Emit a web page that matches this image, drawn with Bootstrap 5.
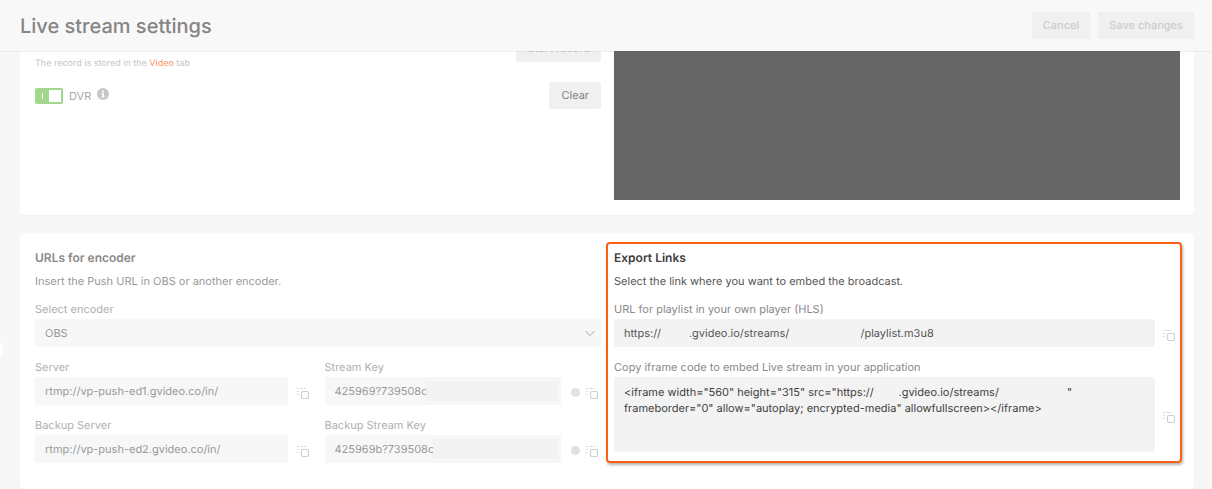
<!DOCTYPE html>
<html lang="en">
<head>
<meta charset="utf-8">
<meta name="viewport" content="width=device-width, initial-scale=1">
<title>Live stream settings</title>
<link href="https://cdn.jsdelivr.net/npm/bootstrap@5.3.0/dist/css/bootstrap.min.css" rel="stylesheet">
<style>
  body { font-family: Inter, "Liberation Sans", sans-serif; font-size: 11px; line-height: 16px; background: #f7f7f7; color: #999; text-rendering: geometricPrecision; }
  input, textarea, select, button { text-rendering: inherit; }
  .page-head { height: 51px; padding: 0 18px 0 20px; background: #f8f8f8; z-index: 2; box-shadow: 0 1px 0 rgba(0,0,0,.05); }
  .page-head h1 { font-size: 20px; line-height: 24px; font-weight: 500; color: #858585; }
  .btn-soft { --bs-btn-font-size: 11px; --bs-btn-line-height: 15px; --bs-btn-padding-y: 6px; --bs-btn-padding-x: 11px; --bs-btn-border-width: 0; --bs-btn-border-radius: 2px; --bs-btn-bg: #f0f0f0; --bs-btn-color: #8c8c8c; --bs-btn-hover-bg: #e8e8e8; --bs-btn-disabled-bg: #f0f0f0; --bs-btn-disabled-color: #ccc; --bs-btn-disabled-opacity: 1; --bs-btn-font-weight: 500; }
  .btn-clear { --bs-btn-font-weight: 400; --bs-btn-padding-x: 12px; --bs-btn-color: #808080; }
  .page-body { padding: 0 18px 0 20px; gap: 18px; }
  .panel { background: #fff; border-radius: 4px; padding: 17px 14px 15px 15px; box-shadow: 0 1px 1px #f0f0f0; }
  .panel-scrolled { margin-top: -33px; }
  .halves { display: grid; grid-template-columns: minmax(0, 1fr) minmax(0, 1fr); column-gap: 13px; }
  .player { background: #666; height: 165px; }
  .caption { font-size: 9px; color: #c4c4c4; }
  .caption a { color: #ff8f66; text-decoration: none; }
  .rec-row { height: 27px; margin-bottom: 20px; }
  .rec-row .caption { padding-top: 21px; }
  .dvr-toggle { appearance: none; width: 28px; height: 16px; margin: 0; border: 2px solid #a3d68f; border-radius: 2px; background: linear-gradient(#fff, #fff) 5px 3px / 1px 6px no-repeat, linear-gradient(90deg, #a3d68f 12px, #fff 12px); }
  .dvr-label { margin: 0 6px; color: #aaa; }
  .panel h2 { font-size: 12px; line-height: 16px; font-weight: 600; margin: 0 0 7px; color: #8a8a8a; }
  .panel p { margin: 0; }
  .stack { display: flex; flex-direction: column; gap: 12px; margin-top: 12px; }
  .stack label { display: block; margin-bottom: 2px; color: #b0b0b0; }
  .field { font-size: 11px; line-height: 16px; padding: 6px 10px; height: 28px; border: 0; border-radius: 2px; background-color: #f7f7f7; color: #999; min-width: 0; }
  .field-select { background-image: url("data:image/svg+xml,%3csvg xmlns='http://www.w3.org/2000/svg' viewBox='0 0 10 10'%3e%3cpath fill='none' stroke='%23aaa' d='M.5 3l4.500 4.500 4.500-4.500'/%3e%3c/svg%3e"); background-size: 10px; background-position: right 6px center; }
  .copy { border: 0; padding: 4px 0 0; background: none; width: 12px; line-height: 0; flex: none; color: #d0d0d0; }
  .copy-server { margin: 0 3px 0 9px; }
  .copy-key { margin-right: 3px; }
  .dot { width: 9px; height: 9px; border-radius: 50%; background: #e2e2e2; margin: 2px 6px 0 10px; border: 0; padding: 0; flex: none; }
  .masked::after { content: ""; position: absolute; inset: 4px 3px 4px 101px; background: #f3f3f3; }
  .masked-late::after { left: 108px; }
  .export { margin: -8px -2px 0 -8px; padding: 6px 5px 9px 6px; border: 2px solid #f9600f; border-radius: 4px; box-shadow: 1px 2px 3px rgba(0,0,0,.3); }
  .export h2 { color: #404040; }
  .export p { color: #555; }
  .export .stack label { color: #888; }
  .export .field { background: #f3f3f3; color: #555; }
  .export textarea.field { height: 75px; resize: none; color: #404040; line-height: 16px; padding-top: 7px; display: block; }
  .side-tab { position: absolute; left: 0; top: 343px; width: 2px; height: 14px; background: #fff; border: 0; padding: 0; border-radius: 0 3px 3px 0; }
</style>
</head>
<body class="d-flex flex-column min-vh-100 position-relative">
<svg class="d-none" aria-hidden="true"><symbol id="copy-icon" viewBox="0 0 12 12"><rect x="4.500" y="4.500" width="7" height="7" rx="1.500" fill="none" stroke="currentColor" stroke-width="1.200"/><path d="M0 1.500h1.500M3 1.500h1.500M5 1.500h1M7 1.500h1.500M0 4.500h1.500M0 7.500h1.500" stroke="currentColor" fill="none"/></symbol></svg>

<header class="page-head d-flex align-items-center justify-content-between position-relative">
  <h1 class="m-0">Live stream settings</h1>
  <div class="d-flex gap-2">
    <button type="button" class="btn btn-soft" disabled>Cancel</button>
    <button type="button" class="btn btn-soft" disabled>Save changes</button>
  </div>
</header>
<button class="side-tab" type="button" aria-label="Expand menu"></button>

<main class="page-body d-flex flex-column flex-grow-1">
  <section class="panel panel-scrolled halves">
    <div>
      <div class="rec-row d-flex justify-content-between align-items-start">
        <p class="caption">The record is stored in the <a href="#">Video</a> tab</p>
        <button type="button" class="btn btn-soft" disabled>Start record</button>
      </div>
      <div class="d-flex align-items-center">
        <input class="dvr-toggle" type="checkbox" role="switch" id="dvr" checked>
        <label for="dvr" class="dvr-label">DVR</label>
        <svg width="12" height="12" viewBox="0 0 12 12" class="mb-1" role="img" aria-label="Info"><circle cx="6" cy="6" r="6" fill="#c8c8c8"/><path d="M5 2.500h2v1.500h-2zM4.500 5h2.500v3.500h.7v1h-3.400v-1h.9v-2.500h-.7z" fill="#fff"/></svg>
        <button type="button" class="btn btn-soft btn-clear ms-auto">Clear</button>
      </div>
    </div>
    <div class="player"></div>
  </section>

  <section class="panel halves flex-grow-1 align-items-start">
    <div>
      <h2>URLs for encoder</h2>
      <p>Insert the Push URL in OBS or another encoder.</p>
      <div class="stack">
        <div>
          <label for="enc">Select encoder</label>
          <select id="enc" class="form-select field field-select"><option>OBS</option></select>
        </div>
        <div class="halves">
          <div class="stack m-0">
            <div>
              <label for="srv">Server</label>
              <div class="d-flex align-items-center">
                <input id="srv" class="form-control field" value="rtmp://vp-push-ed1.gvideo.co/in/" readonly>
                <button class="copy copy-server" type="button" aria-label="Copy"><svg width="12" height="12"><use href="#copy-icon"/></svg></button>
              </div>
            </div>
            <div>
              <label for="bsrv">Backup Server</label>
              <div class="d-flex align-items-center">
                <input id="bsrv" class="form-control field" value="rtmp://vp-push-ed2.gvideo.co/in/" readonly>
                <button class="copy copy-server" type="button" aria-label="Copy"><svg width="12" height="12"><use href="#copy-icon"/></svg></button>
              </div>
            </div>
          </div>
          <div class="stack m-0">
            <div>
              <label for="key">Stream Key</label>
              <div class="d-flex align-items-center">
                <div class="masked position-relative flex-grow-1"><input id="key" class="form-control field" value="425969?739508c0" readonly></div>
                <button class="dot" type="button" aria-label="Show key"></button>
                <button class="copy copy-key" type="button" aria-label="Copy"><svg width="12" height="12"><use href="#copy-icon"/></svg></button>
              </div>
            </div>
            <div>
              <label for="bkey">Backup Stream Key</label>
              <div class="d-flex align-items-center">
                <div class="masked masked-late position-relative flex-grow-1"><input id="bkey" class="form-control field" value="425969b?739508c" readonly></div>
                <button class="dot" type="button" aria-label="Show key"></button>
                <button class="copy copy-key" type="button" aria-label="Copy"><svg width="12" height="12"><use href="#copy-icon"/></svg></button>
              </div>
            </div>
          </div>
        </div>
      </div>
    </div>

    <div class="export">
      <h2>Export Links</h2>
      <p>Select the link where you want to embed the broadcast.</p>
      <div class="stack">
        <div>
          <label for="hls">URL for playlist in your own player (HLS)</label>
          <div class="d-flex align-items-center gap-2">
            <input id="hls" class="form-control field" readonly value="https://&nbsp;&nbsp;&nbsp;&nbsp;&nbsp;&nbsp;&nbsp;&nbsp;&nbsp;.gvideo.io/streams/&nbsp;&nbsp;&nbsp;&nbsp;&nbsp;&nbsp;&nbsp;&nbsp;&nbsp;&nbsp;&nbsp;&nbsp;&nbsp;&nbsp;&nbsp;&nbsp;&nbsp;&nbsp;&nbsp;&nbsp;&nbsp;&nbsp;&nbsp;/playlist.m3u8">
            <button class="copy" type="button" aria-label="Copy"><svg width="12" height="12"><use href="#copy-icon"/></svg></button>
          </div>
        </div>
        <div>
          <label for="ifr">Copy iframe code to embed Live stream in your application</label>
          <div class="d-flex align-items-center gap-2">
            <textarea id="ifr" class="form-control field" readonly>&lt;iframe width="560" height="315" src="https://&nbsp;&nbsp;&nbsp;&nbsp;&nbsp;&nbsp;&nbsp;&nbsp;.gvideo.io/streams/&nbsp;&nbsp;&nbsp;&nbsp;&nbsp;&nbsp;&nbsp;&nbsp;&nbsp;&nbsp;&nbsp;&nbsp;&nbsp;&nbsp;&nbsp;&nbsp;&nbsp;&nbsp;&nbsp;&nbsp;&nbsp;&nbsp;"
frameborder="0" allow="autoplay; encrypted-media" allowfullscreen&gt;&lt;/iframe&gt;</textarea>
            <button class="copy" type="button" aria-label="Copy"><svg width="12" height="12"><use href="#copy-icon"/></svg></button>
          </div>
        </div>
      </div>
    </div>
  </section>
</main>
<script src="https://cdn.jsdelivr.net/npm/bootstrap@5.3.0/dist/js/bootstrap.bundle.min.js"></script>
</body>
</html>
